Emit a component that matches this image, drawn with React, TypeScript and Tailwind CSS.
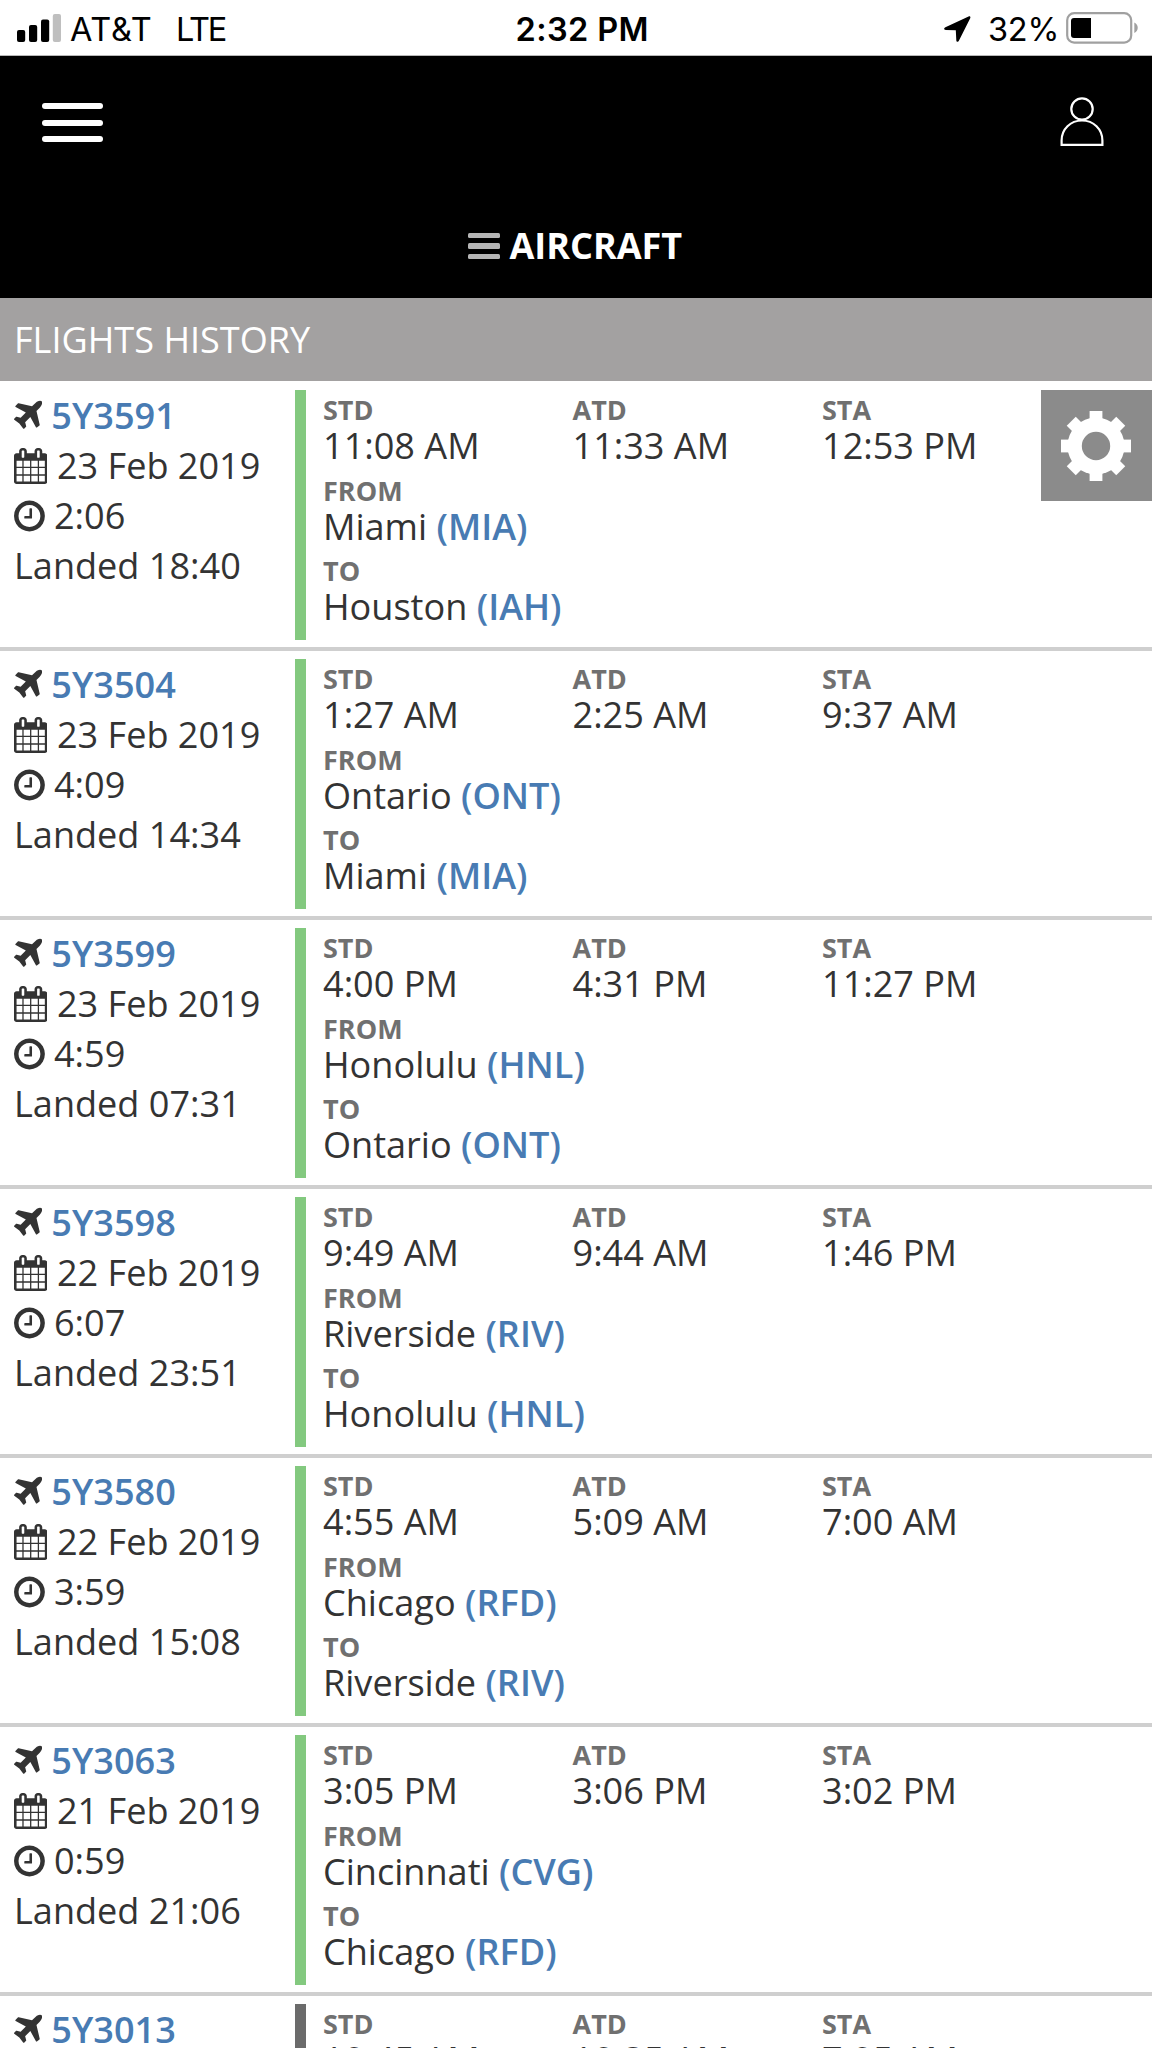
import React from 'react';

type Status = 'landed' | 'unknown';

interface Flight {
  number: string;
  date?: string;
  duration?: string;
  landed?: string;
  std: string;
  atd: string;
  sta: string;
  from?: [string, string];
  to?: [string, string];
  status: Status;
}

const flights: Flight[] = [
  { number: '5Y3591', date: '23 Feb 2019', duration: '2:06', landed: '18:40', std: '11:08 AM', atd: '11:33 AM', sta: '12:53 PM', from: ['Miami', 'MIA'], to: ['Houston', 'IAH'], status: 'landed' },
  { number: '5Y3504', date: '23 Feb 2019', duration: '4:09', landed: '14:34', std: '1:27 AM', atd: '2:25 AM', sta: '9:37 AM', from: ['Ontario', 'ONT'], to: ['Miami', 'MIA'], status: 'landed' },
  { number: '5Y3599', date: '23 Feb 2019', duration: '4:59', landed: '07:31', std: '4:00 PM', atd: '4:31 PM', sta: '11:27 PM', from: ['Honolulu', 'HNL'], to: ['Ontario', 'ONT'], status: 'landed' },
  { number: '5Y3598', date: '22 Feb 2019', duration: '6:07', landed: '23:51', std: '9:49 AM', atd: '9:44 AM', sta: '1:46 PM', from: ['Riverside', 'RIV'], to: ['Honolulu', 'HNL'], status: 'landed' },
  { number: '5Y3580', date: '22 Feb 2019', duration: '3:59', landed: '15:08', std: '4:55 AM', atd: '5:09 AM', sta: '7:00 AM', from: ['Chicago', 'RFD'], to: ['Riverside', 'RIV'], status: 'landed' },
  { number: '5Y3063', date: '21 Feb 2019', duration: '0:59', landed: '21:06', std: '3:05 PM', atd: '3:06 PM', sta: '3:02 PM', from: ['Cincinnati', 'CVG'], to: ['Chicago', 'RFD'], status: 'landed' },
  { number: '5Y3013', std: '10:45 AM', atd: '10:35 AM', sta: '7:05 AM', status: 'unknown' },
];

const PlaneIcon = () => (
  <svg className="mt-[2px] h-[36px] w-[28.3px] shrink-0" viewBox="192 0 1408 1792" fill="currentColor">
    <path d="M1568 160q44 52 12 148t-108 172l-161 161 160 696q5 19-12 33l-128 96q-7 6-19 6-4 0-7-1-15-3-21-16l-279-508-259 259 53 194q5 17-8 31l-96 96q-9 9-23 9h-2q-15-2-24-13l-189-252-252-189q-11-7-13-23-1-13 9-25l96-97q9-9 23-9 6 0 8 1l194 53 259-259-508-279q-14-8-17-24-2-16 9-27l128-128q14-13 30-8l665 159 160-160q76-76 172-108t148 12z" />
  </svg>
);

const CalendarIcon = () => (
  <svg className="mt-[2px] h-[36px] w-[33.4px] shrink-0" viewBox="64 0 1664 1792" fill="currentColor">
    <path d="M192 1664h288v-288h-288v288zm352 0h320v-288h-320v288zm-352-352h288v-320h-288v320zm352 0h320v-320h-320v320zm-352-384h288v-288h-288v288zm736 736h320v-288h-320v288zm-384-736h320v-288h-320v288zm768 736h288v-288h-288v288zm-384-352h320v-320h-320v320zm-352-864v-288q0-13-9.5-22.5t-22.5-9.5h-64q-13 0-22.5 9.5t-9.5 22.5v288q0 13 9.5 22.5t22.5 9.5h64q13 0 22.5-9.5t9.5-22.5zm736 864h288v-320h-288v320zm-384-384h320v-288h-320v288zm384 0h288v-288h-288v288zm32-480v-288q0-13-9.5-22.5t-22.5-9.5h-64q-13 0-22.5 9.5t-9.5 22.5v288q0 13 9.5 22.5t22.5 9.5h64q13 0 22.5-9.5t9.5-22.5zm384-64v1280q0 52-38 90t-90 38h-1408q-52 0-90-38t-38-90v-1280q0-52 38-90t90-38h128v-96q0-66 47-113t113-47h64q66 0 113 47t47 113v96h384v-96q0-66 47-113t113-47h64q66 0 113 47t47 113v96h128q52 0 90 38t38 90z" />
  </svg>
);

const ClockIcon = () => (
  <svg className="mt-[2px] h-[36px] w-[30.9px] shrink-0" viewBox="128 0 1536 1792" fill="currentColor">
    <path d="M1024 544v448q0 14-9 23t-23 9h-320q-14 0-23-9t-9-23v-64q0-14 9-23t23-9h224v-352q0-14 9-23t23-9h64q14 0 23 9t9 23zm416 352q0-148-73-273t-198-198-273-73-273 73-198 198-73 273 73 273 198 198 273 73 273-73 198-198 73-273zm224 0q0 209-103 385.5t-279.5 279.5-385.5 103-385.5-103-279.5-279.5-103-385.5 103-385.5 279.5-279.5 385.5-103 385.5 103 279.5 279.5 103 385.5z" />
  </svg>
);

const GearIcon = () => (
  <svg className="mr-[1px] h-[70px] w-[70px]" viewBox="-35 -35 70 70">
    {[0, 45, 90, 135].map((angle) => (
      <rect key={angle} x="-6.4" y="-35" width="12.8" height="70" fill="#fff" transform={`rotate(${angle})`} />
    ))}
    <circle r="28.5" fill="#fff" />
    <circle r="14.2" fill="#8b8b8b" />
  </svg>
);

const StatusBar = () => (
  <div className="flex h-[56px] shrink-0 items-start border-b border-[#b8b8b8] bg-white font-[Inter,sans-serif] text-[32.5px] leading-[59px] text-black">
    <div className="flex w-[515.5px] items-start">
      <svg className="mt-[14px] ml-[17px] h-[28px] w-[44px]" viewBox="0 0 44 28">
        <rect x="0" y="16" width="8.2" height="12" rx="2" />
        <rect x="12" y="11" width="8.2" height="17" rx="2" />
        <rect x="24" y="5.5" width="8.2" height="22.5" rx="2" />
        <rect x="35.8" y="0" width="8.2" height="28" rx="2" fill="#bfbfbf" />
      </svg>
      <span className="ml-[9px] w-[106px] tracking-[0.7px]">AT&amp;T</span>
      <span className="tracking-[-2.2px]">LTE</span>
    </div>
    <span className="w-[428.5px] font-semibold tracking-[0.4px]">2:32 PM</span>
    <svg className="mt-[16px] h-[26px] w-[27px]" viewBox="0 0 27 26">
      <path d="M24.6.4 1.4 11.2C-.5 12.2-.2 13.8 1.8 13.9L11.8 14.2 12.3 24.2C12.4 26.2 14.2 26.4 15 24.6L26.2 2.2C26.8.8 26-.2 24.6.4Z" />
    </svg>
    <span className="ml-[17px] w-[77px] tracking-[-0.2px]">32%</span>
    <svg className="mt-[12px] h-[32px] w-[74px]" viewBox="0 0 74 32">
      <rect x="2.2" y="1.2" width="64" height="29.4" rx="7" fill="none" stroke="#a0a0a0" strokeWidth="2.2" />
      <rect x="6" y="6" width="20" height="20" rx="3" />
      <rect x="21" y="6" width="5" height="20" />
      <path d="M69.3 10.5c4.6 2 4.6 8.5 0 10.5z" fill="#a0a0a0" />
    </svg>
  </div>
);

const Header = () => (
  <header className="flex h-[242px] shrink-0 flex-col bg-black text-white">
    <div className="flex items-start justify-between pt-[40px] pr-[48px] pl-[42px]">
      <div className="flex flex-col gap-[10.5px] pt-[7px]">
        <span className="h-[6px] w-[61px] rounded-[3px] bg-white" />
        <span className="h-[6px] w-[61px] rounded-[3px] bg-white" />
        <span className="h-[6px] w-[61px] rounded-[3px] bg-white" />
      </div>
      <svg className="h-[51px] w-[44px]" viewBox="0 0 44 51" fill="none" stroke="#fff" strokeWidth="2.2">
        <circle cx="22" cy="13" r="10.7" />
        <path d="M1.6 48.9V44.5C1.6 33 10.5 24.5 22 24.5S42.4 33 42.4 44.5V48.9Z" />
      </svg>
    </div>
    <div className="mt-[74px] flex h-[50px] items-center pl-[468px]">
      <div className="flex flex-col gap-[5px]">
        <span className="h-[5.5px] w-[31.5px] rounded-[1.5px] bg-[#b5b5b5]" />
        <span className="h-[5.5px] w-[31.5px] rounded-[1.5px] bg-[#b5b5b5]" />
        <span className="h-[5.5px] w-[31.5px] rounded-[1.5px] bg-[#b5b5b5]" />
      </div>
      <h1 className="ml-[10px] text-[36px] leading-[50px] font-bold">AIRCRAFT</h1>
    </div>
  </header>
);

const Label = ({ children }: { children: React.ReactNode }) => (
  <div className="text-[27px] leading-[30px] font-bold text-[#707070]">{children}</div>
);

const Time = ({ label, value }: { label: string; value: string }) => (
  <div className="w-[249.5px]">
    <Label>{label}</Label>
    <div className="leading-[41px]">{value}</div>
  </div>
);

const Place = ({ label, place }: { label: string; place: [string, string] }) => (
  <div>
    <Label>{label}</Label>
    <div className="leading-[41px]">
      {place[0]} <a className="font-semibold text-[#487bb3]">({place[1]})</a>
    </div>
  </div>
);

const FlightRow = ({ flight, action }: { flight: Flight; action?: boolean }) => (
  <div className="flex h-[269px] shrink-0 border-b-[4px] border-[#cfcfcf] pt-[8px] text-[36.1px] text-[#333]">
    <div className="w-[295px] pl-[14px] leading-[50px]">
      <div className="flex h-[50px] items-center gap-[9px]">
        <PlaneIcon />
        <a className="font-semibold text-[#487bb3]">{flight.number}</a>
      </div>
      {flight.date && (
        <div className="flex h-[50px] items-center gap-[9.5px]">
          <CalendarIcon />
          {flight.date}
        </div>
      )}
      {flight.duration && (
        <div className="flex h-[50px] items-center gap-[9px]">
          <ClockIcon />
          {flight.duration}
        </div>
      )}
      {flight.landed && <div>Landed {flight.landed}</div>}
    </div>
    <div className={flight.status === 'landed' ? 'h-[250px] w-[11px] bg-[#83c97f]' : 'h-[250px] w-[11px] bg-[#6b6b6b]'} />
    <div className="flex flex-col gap-[9.7px] pt-[5px] pl-[17px]">
      <div className="flex">
        <Time label="STD" value={flight.std} />
        <Time label="ATD" value={flight.atd} />
        <Time label="STA" value={flight.sta} />
      </div>
      {flight.from && <Place label="FROM" place={flight.from} />}
      {flight.to && <Place label="TO" place={flight.to} />}
    </div>
    {action && (
      <button className="-ml-[30.5px] flex h-[111px] w-[111px] items-center justify-center bg-[#8b8b8b]">
        <GearIcon />
      </button>
    )}
  </div>
);

const App: React.FC = () => {
  return (
    <div className="flex h-[2048px] w-[1152px] flex-col overflow-hidden bg-white font-['Open_Sans',sans-serif]">
      <StatusBar />
      <Header />
      <div className="mb-px h-[83px] shrink-0 bg-[#a3a1a1] pl-[14px] text-[36.1px] leading-[83px] text-white">
        FLIGHTS HISTORY
      </div>
      {flights.map((flight, index) => (
        <FlightRow key={flight.number} flight={flight} action={index === 0} />
      ))}
    </div>
  );
};

export default App;
